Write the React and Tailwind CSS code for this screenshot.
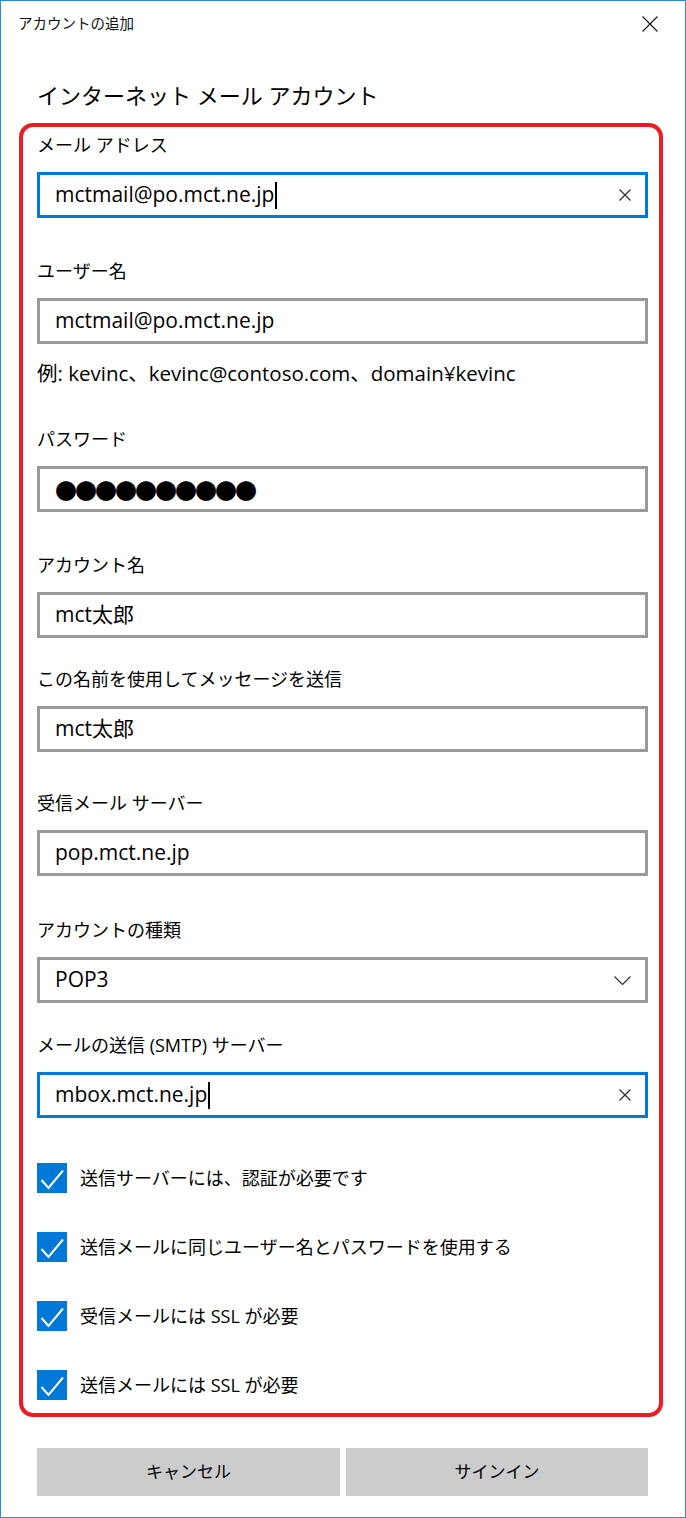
import React from 'react';

const ink = 'text-[#000000]';

function Label({ children, className = '' }) {
  return (
    <div className={`h-[28px] leading-[28px] text-[18px] ${ink} ${className}`}>{children}</div>
  );
}

function ClearIcon() {
  return (
    <svg width="14" height="14" viewBox="0 0 14 14" className="shrink-0">
      <path d="M1.5 1.5 L12.5 12.5 M12.5 1.5 L1.5 12.5" stroke="#333" strokeWidth="1.3" fill="none" />
    </svg>
  );
}

function TextBox({ value, focused, children }) {
  return (
    <div
      className={`mt-[13px] h-[46px] flex items-center pl-[15px] pr-[13px] border-[3px] ${
        focused ? 'border-[#0078d7]' : 'border-[#999999]'
      } bg-white`}
    >
      {children ? (
        children
      ) : (
        <>
          <span className="text-[21px] text-black whitespace-nowrap">{value}</span>
          {focused && <span className="w-[2px] h-[27px] bg-black ml-[1px]" />}
          {focused && (
            <span className="ml-auto">
              <ClearIcon />
            </span>
          )}
        </>
      )}
    </div>
  );
}

function Check({ children, className = '' }) {
  return (
    <div className={`flex items-center h-[30px] ${className}`}>
      <div className="w-[30px] h-[30px] bg-[#0078d7] flex items-center justify-center shrink-0">
        <svg width="30" height="30" viewBox="0 0 30 30">
          <path d="M4.5 17 L11.5 25 L26 7.5" stroke="#fff" strokeWidth="2" fill="none" />
        </svg>
      </div>
      <span className={`ml-[13px] text-[18px] ${ink} whitespace-nowrap`}>{children}</span>
    </div>
  );
}

export default function App() {
  return (
    <div className="w-[686px] h-[1518px] border border-[#2b88d8] bg-white flex flex-col font-['Open_Sans','Noto_Sans_CJK_JP',sans-serif]">
      {/* title bar */}
      <div className="h-[46px] flex items-center">
        <span className="pl-[17px] text-[14.5px] text-[#111]">アカウントの追加</span>
        <svg width="16" height="16" viewBox="0 0 16 16" className="ml-auto mr-[27px]">
          <path d="M0.5 0.5 L15.5 15.5 M15.5 0.5 L0.5 15.5" stroke="#111" strokeWidth="1.1" fill="none" />
        </svg>
      </div>

      <h1 className="mt-[30px] pl-[36px] h-[36px] leading-[36px] text-[22px] text-black font-normal">
        インターネット メール アカウント
      </h1>

      <div className="mt-[10px] ml-[18px] w-[644px] border-[4px] border-[#ed1c24] rounded-[14px] pt-[4px] pl-[14px] pr-[11px] pb-[13px] flex flex-col">
        <Label>メール アドレス</Label>
        <TextBox value="mctmail@po.mct.ne.jp" focused />

        <Label className="mt-[39px]">ユーザー名</Label>
        <TextBox value="mctmail@po.mct.ne.jp" />
        <div className="mt-[15px] h-[28px] leading-[28px] text-[20.5px] text-black whitespace-nowrap">
          例: kevinc、kevinc@contoso.com、domain¥kevinc
        </div>

        <Label className="mt-[38px]">パスワード</Label>
        <TextBox>
          <span className="font-['Noto_Sans_CJK_JP'] text-[22px] tracking-[-2px] text-black leading-none">
            ●●●●●●●●●●
          </span>
        </TextBox>

        <Label className="mt-[39px]">アカウント名</Label>
        <TextBox value="mct太郎" />

        <Label className="mt-[27px]">この名前を使用してメッセージを送信</Label>
        <TextBox value="mct太郎" />

        <Label className="mt-[37px]">受信メール サーバー</Label>
        <TextBox value="pop.mct.ne.jp" />

        <Label className="mt-[40px]">アカウントの種類</Label>
        <TextBox>
          <span className="text-[21px] text-black">POP3</span>
          <svg width="17" height="9" viewBox="0 0 17 9" className="ml-auto mr-[1px]">
            <path d="M0.5 0.5 L8.5 8.5 L16.5 0.5" stroke="#333" strokeWidth="1.2" fill="none" />
          </svg>
        </TextBox>

        <Label className="mt-[28px]">メールの送信 (SMTP) サーバー</Label>
        <TextBox value="mbox.mct.ne.jp" focused />

        <Check className="mt-[45px]">送信サーバーには、認証が必要です</Check>
        <Check className="mt-[39px]">送信メールに同じユーザー名とパスワードを使用する</Check>
        <Check className="mt-[39px]">受信メールには SSL が必要</Check>
        <Check className="mt-[39px]">送信メールには SSL が必要</Check>
      </div>

      <div className="mt-[31px] ml-[36px] flex gap-[6px]">
        <button className="w-[303px] h-[48px] bg-[#cccccc] text-[17px] text-black">キャンセル</button>
        <button className="w-[302px] h-[48px] bg-[#cccccc] text-[17px] text-black">サインイン</button>
      </div>
    </div>
  );
}
